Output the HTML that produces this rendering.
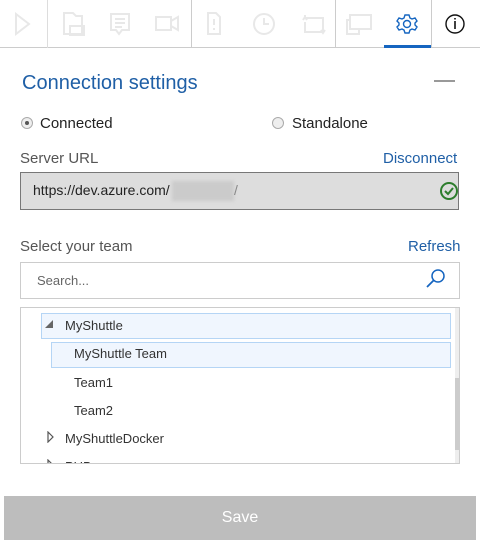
<!DOCTYPE html><html><head><style>
body{margin:0;width:480px;height:544px;background:#fff;font-family:"Liberation Sans",sans-serif;position:relative;overflow:hidden;color:#333}
.a{position:absolute}
.ic{stroke:#e8e8e8;fill:none;stroke-width:2}
</style></head><body>
<div class="a" style="left:0;top:47px;width:480px;height:1px;background:#ccc"></div>
<div class="a" style="left:47px;top:0;width:1px;height:48px;background:#ddd"></div>
<div class="a" style="left:191px;top:0;width:1px;height:48px;background:#ccc"></div>
<div class="a" style="left:335px;top:0;width:1px;height:48px;background:#ccc"></div>
<div class="a" style="left:431px;top:0;width:1px;height:48px;background:#ccc"></div>
<div class="a" style="left:384px;top:45px;width:47px;height:3px;background:#1565c0"></div>
<svg class="a" style="left:0;top:0" width="480" height="48">
<path class="ic" d="M16 14 L29 24 L16 34 Z"/>
<path class="ic" d="M64 34 V13 h9 l3 3 h6 v18 Z"/><rect class="ic" x="70" y="26" width="14" height="9"/>
<path class="ic" d="M111 14 h18 v16 h-7 l-3 4 -3 -4 h-5 Z M115 19 h10 M115 23 h10 M115 27 h7"/>
<path class="ic" d="M156 17 h15 v13 h-15 Z M171 21 l7 -4 v13 l-7 -4"/>
<path class="ic" d="M208 13 h8 l4 4 v17 h-12 Z M214 19 v6 M214 28 v2"/>
<circle class="ic" cx="264" cy="24" r="10"/><path class="ic" d="M264 18 v6 h5"/>
<path class="ic" d="M305 18 h18 v14 M305 18 v-3 M303 20 l2 -3 2 3 M323 32 h-18 v-10 M321 30 l2 3 2 -3"/>
<path class="ic" d="M350 15 h21 v14 h-21 Z M350 20 h-3 v14 h12 v-5"/>
<g transform="translate(407,24)" stroke="#1565c0" fill="none" stroke-width="1.4">
<path d="M-2 -9 h4 l1 3 2 1 3 -1 2 3 -2 2 v2 l2 2 -2 3 -3 -1 -2 1 -1 3 h-4 l-1 -3 -2 -1 -3 1 -2 -3 2 -2 v-2 l-2 -2 2 -3 3 1 2 -1 Z"/><circle r="3.5"/></g>
<circle cx="455" cy="24" r="9" stroke="#111" stroke-width="1.4" fill="none"/><path d="M455 21 v8 M455 18 v1.5" stroke="#111" stroke-width="1.6"/>
</svg>
<div class="a" style="left:22px;top:72px;font-size:20px;color:#1f5fa6">Connection settings</div>
<div class="a" style="left:434px;top:80px;width:21px;height:2px;background:#999"></div>
<div class="a" style="left:21px;top:117px;width:10px;height:10px;border:1px solid #aaa;border-radius:50%;background:#eee"></div>
<div class="a" style="left:25px;top:121px;width:4px;height:4px;border-radius:50%;background:#555"></div>
<div class="a" style="left:40px;top:115px;font-size:15px;color:#222">Connected</div>
<div class="a" style="left:272px;top:117px;width:10px;height:10px;border:1px solid #aaa;border-radius:50%;background:#eee"></div>
<div class="a" style="left:292px;top:115px;font-size:15px;color:#222">Standalone</div>
<div class="a" style="left:20px;top:150px;font-size:15px;color:#555">Server URL</div>
<div class="a" style="left:383px;top:150px;font-size:15px;color:#1f5fa6">Disconnect</div>
<div class="a" style="left:20px;top:172px;width:437px;height:36px;border:1px solid #777;background:#ddd"></div>
<div class="a" style="left:33px;top:182px;font-size:14px;color:#222">https://dev.azure.com/</div>
<div class="a" style="left:172px;top:181px;width:62px;height:20px;background:#cbcbcb;filter:blur(1.5px)"></div>
<div class="a" style="left:234px;top:182px;font-size:14px;color:#888">/</div>
<svg class="a" style="left:439px;top:181px" width="20" height="20"><circle cx="10" cy="10" r="8" stroke="#2d7d2d" stroke-width="2" fill="none"/><path d="M6 10 l3 3 5 -6" stroke="#2d7d2d" stroke-width="2" fill="none"/></svg>
<div class="a" style="left:20px;top:238px;font-size:15px;color:#555">Select your team</div>
<div class="a" style="left:408px;top:238px;font-size:15px;color:#1f5fa6">Refresh</div>
<div class="a" style="left:20px;top:262px;width:438px;height:35px;border:1px solid #ccc"></div>
<div class="a" style="left:37px;top:273px;font-size:13px;color:#666">Search...</div>
<svg class="a" style="left:425px;top:268px" width="22" height="22"><circle cx="13" cy="8" r="6" stroke="#1565c0" stroke-width="1.5" fill="none"/><path d="M9 12 L2 19" stroke="#1565c0" stroke-width="1.8"/></svg>
<div class="a" style="left:20px;top:307px;width:438px;height:155px;border:1px solid #ccc;overflow:hidden">
<div class="a" style="left:434px;top:0;width:5px;height:155px;background:#eee"></div>
<div class="a" style="left:434px;top:70px;width:5px;height:72px;background:#ccc"></div>
<div class="a" style="left:20px;top:5px;width:408px;height:24px;border:1px solid #b5d5f5;background:#f0f6fe"></div>
<div class="a" style="left:30px;top:34px;width:398px;height:24px;border:1px solid #b5d5f5;background:#f0f6fe"></div>
<svg class="a" style="left:24px;top:12px" width="10" height="10"><path d="M8 0 V8 H0 Z" fill="#666"/></svg>
<div class="a" style="left:44px;top:10px;font-size:13px;color:#333">MyShuttle</div>
<div class="a" style="left:53px;top:38px;font-size:13px;color:#333">MyShuttle Team</div>
<div class="a" style="left:53px;top:67px;font-size:13px;color:#333">Team1</div>
<div class="a" style="left:53px;top:95px;font-size:13px;color:#333">Team2</div>
<svg class="a" style="left:26px;top:123px" width="8" height="12"><path d="M1 1 L6 6 L1 11 Z" fill="none" stroke="#555" stroke-width="1.2"/></svg>
<div class="a" style="left:44px;top:123px;font-size:13px;color:#333">MyShuttleDocker</div>
<svg class="a" style="left:26px;top:151px" width="8" height="12"><path d="M1 1 L6 6 L1 11 Z" fill="none" stroke="#555" stroke-width="1.2"/></svg>
<div class="a" style="left:44px;top:151px;font-size:13px;color:#333">PUB</div>
</div>
<div class="a" style="left:4px;top:496px;width:472px;height:44px;background:#bdbdbd;color:#fff;font-size:16px;text-align:center;line-height:44px">Save</div>
</body></html>
